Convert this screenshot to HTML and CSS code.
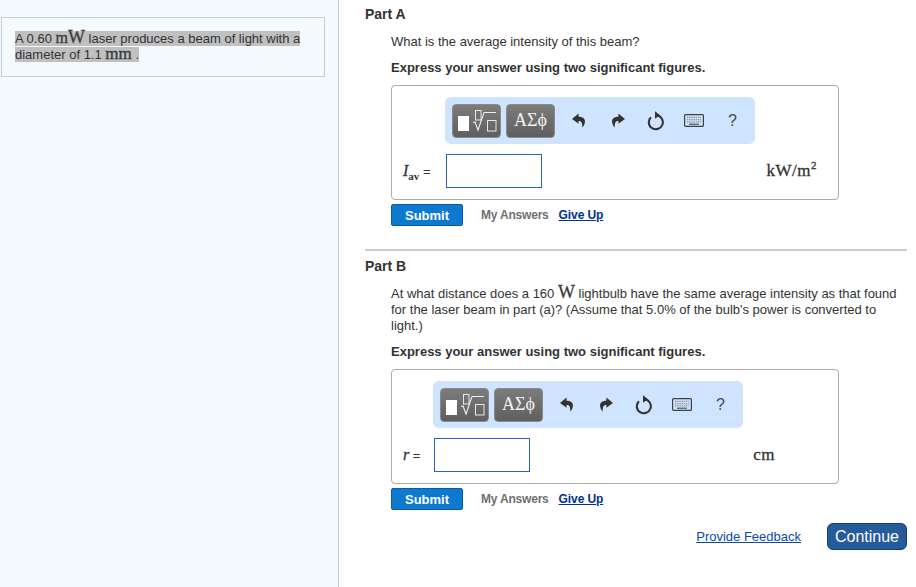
FILE: index.html
```html
<!DOCTYPE html>
<html lang="en">
<head>
<meta charset="utf-8">
<title>Part A and Part B</title>
<link rel="stylesheet" href="styles.css">
</head>
<body>
<svg class="defs" width="0" height="0" aria-hidden="true">
  <symbol id="i-undo" viewBox="0 0 14 15"><path d="M6.6 0.6 L0 6 L6.6 10.8 V8 C9.4 7.9 10.4 9.6 10.3 14.6 C14 10.8 14.8 3.7 6.6 3.8 Z" fill="#333"/></symbol>
  <symbol id="i-redo" viewBox="0 0 14 15"><path d="M7.4 0.6 L14 6 L7.4 10.8 V8 C4.6 7.9 3.6 9.6 3.7 14.6 C0 10.8 -0.8 3.7 7.4 3.8 Z" fill="#333"/></symbol>
  <symbol id="i-reset" viewBox="0 0 18 20"><path d="M9.5 4.3 A7 7 0 1 1 3.9 6.3" fill="none" stroke="#333" stroke-width="2.1"/><path d="M8 0.3 L13 4.2 L8 7.8 Z" fill="#333"/></symbol>
  <symbol id="i-keys" viewBox="0 0 20 13"><rect x="0.6" y="0.6" width="18.8" height="11.8" rx="1" fill="none" stroke="#3c4148" stroke-width="1.2"/><path d="M3 3.4h14M3 5.6h14M3 7.8h14" stroke="#8d9299" stroke-width="1.2" stroke-dasharray="1.4 .8" fill="none"/><path d="M5 10.2h10" stroke="#555" stroke-width="1.2"/></symbol>
  <symbol id="i-tpl" viewBox="0 0 46 28"><rect x="4" y="9" width="11" height="15" fill="#fff"/><rect x="21.5" y="3.5" width="5.5" height="9.5" fill="none" stroke="#e8e8e8"/><path d="M19 15.5 L21 15 L24 23 L30 5.5 H42" fill="none" stroke="#eee" stroke-width="1.1"/><rect x="33.5" y="13.5" width="8.5" height="10.5" fill="none" stroke="#e8e8e8"/></symbol>
</svg>
<div class="page">
  <aside class="side">
    <div class="intro"><p class="intro-text"><span class="mark">A 0.60 <span class="unit">m</span><span class="unit big">W</span> laser produces a beam of light with a diameter of 1.1 <span class="unit mm">mm</span> .</span></p></div>
  </aside>
  <main class="main">
    <section class="part part-a">
      <h2 class="part-title">Part A</h2>
      <div class="part-body">
        <p class="question">What is the average intensity of this beam?</p>
        <p class="instruction">Express your answer using two significant figures.</p>
        <div class="answer">
          <div class="toolbar toolbar-a">
            <button class="tool-btn" type="button" aria-label="Templates"><svg class="tpl" width="46" height="28"><use href="#i-tpl"/></svg></button>
            <button class="tool-btn sym" type="button">ΑΣϕ</button>
            <div class="tools">
              <svg class="ic" width="14" height="15"><use href="#i-undo"/></svg>
              <svg class="ic" width="14" height="15"><use href="#i-redo"/></svg>
              <svg class="ic" width="18" height="20"><use href="#i-reset"/></svg>
              <svg class="ic" width="20" height="13"><use href="#i-keys"/></svg>
              <span class="help">?</span>
            </div>
          </div>
          <div class="answer-row">
            <span class="label label-a"><i class="var">I</i><sub class="sub">av</sub> =</span>
            <span class="input"></span>
            <span class="units">kW/m<sup class="sup">2</sup></span>
          </div>
        </div>
        <div class="actions">
          <button class="submit" type="button">Submit</button>
          <span class="my">My Answers</span>
          <a class="give" href="#">Give Up</a>
        </div>
      </div>
    </section>
    <hr class="rule">
    <section class="part">
      <h2 class="part-title">Part B</h2>
      <div class="part-body">
        <p class="question">At what distance does a 160 <span class="unit big">W</span> lightbulb have the same average intensity as that found for the laser beam in part (a)? (Assume that 5.0% of the bulb's power is converted to light.)</p>
        <p class="instruction">Express your answer using two significant figures.</p>
        <div class="answer">
          <div class="toolbar toolbar-b">
            <button class="tool-btn" type="button" aria-label="Templates"><svg class="tpl" width="46" height="28"><use href="#i-tpl"/></svg></button>
            <button class="tool-btn sym" type="button">ΑΣϕ</button>
            <div class="tools">
              <svg class="ic" width="14" height="15"><use href="#i-undo"/></svg>
              <svg class="ic" width="14" height="15"><use href="#i-redo"/></svg>
              <svg class="ic" width="18" height="20"><use href="#i-reset"/></svg>
              <svg class="ic" width="20" height="13"><use href="#i-keys"/></svg>
              <span class="help">?</span>
            </div>
          </div>
          <div class="answer-row">
            <span class="label label-b"><i class="var">r</i> =</span>
            <span class="input"></span>
            <span class="units units-b">cm</span>
          </div>
        </div>
        <div class="actions">
          <button class="submit" type="button">Submit</button>
          <span class="my">My Answers</span>
          <a class="give" href="#">Give Up</a>
        </div>
      </div>
    </section>
    <div class="footer">
      <a class="feedback" href="#">Provide Feedback</a>
      <button class="continue" type="button">Continue</button>
    </div>
  </main>
</div>
</body>
</html>
```
FILE: styles.css
```css
* { box-sizing: border-box; }
html, body { margin: 0; height: 100%; }
body { background: #fff; color: #333; font-family: "Liberation Sans", Arial, sans-serif; font-size: 13px; overflow: hidden; }
.defs { display: block; height: 0; }
.page { display: flex; height: 587px; }

.side { width: 339px; flex: none; background: #f5faff; border-right: 1px solid #b9cfe3; padding: 17px 13px 0 1px; }
.intro { height: 60px; border: 1px solid #b9cfe3; padding: 13px 13px 0; }
.intro-text { margin: 0; font-size: 13px; line-height: 16px; color: #333; }
.mark { background: #c0c0c0; }
.unit { font-family: "Liberation Serif", "DejaVu Serif", serif; font-size: 16px; line-height: 0; color: #3a3a3a; -webkit-text-stroke: .3px #3a3a3a; }
.mm { font-size: 17px; }
.big { font-size: 18px; }

.main { flex: 1; min-width: 0; padding: 0 9px 0 26px; }
.part-a { padding-top: 6px; }
.part-title { margin: 0; font-size: 14px; line-height: 17px; font-weight: bold; color: #333; }
.part-body { padding-left: 26px; }
.question { margin: 11px 0 0; font-size: 13px; line-height: 16px; }
.instruction { margin: 10px 0 0; font-size: 13px; line-height: 16px; font-weight: bold; }

.answer { width: 448px; height: 115px; margin-top: 9px; border: 1px solid #aaa; border-radius: 4px; background: #fff; padding: 11px 0 0 11px; }
.toolbar { display: flex; align-items: center; width: 310px; height: 47px; background: #cfe5ff; border-radius: 6px; padding-left: 7px; }
.toolbar-a { margin-left: 42px; }
.toolbar-b { margin-left: 30px; }
.tool-btn { width: 49px; height: 34px; margin: 0 5px 0 0; padding: 0; border: 1px solid #8a8a8a; border-radius: 4px; background: linear-gradient(#7c7c7c, #5f5f5f); color: #f2f2f2; display: flex; align-items: center; justify-content: center; }
.sym { font-family: "Liberation Serif", serif; font-size: 18px; }
.tpl { display: block; }
.tools { display: flex; align-items: center; margin-left: 12px; }
.ic { display: block; flex: none; }
.ic:nth-child(1) { margin-right: 25px; }
.ic:nth-child(2) { margin-right: 22px; }
.ic:nth-child(3) { margin-right: 19px; }
.ic:nth-child(4) { margin-right: 24px; }
.help { font-size: 16px; line-height: 18px; color: #444; }

.answer-row { display: flex; align-items: center; height: 34px; margin-top: 10px; }
.label { font-size: 13px; color: #333; flex: none; }
.label-a { width: 43px; }
.label-b { width: 31px; }
.var { font-family: "Liberation Serif", serif; font-size: 16px; -webkit-text-stroke: .3px #333; }
.sub { font-family: "Liberation Serif", serif; font-size: 11px; font-weight: bold; line-height: 0; }
.input { width: 96px; height: 34px; border: 1px solid #2a62c4; background: #fff; flex: none; }
.units { margin-left: auto; margin-right: 21px; font-family: "Liberation Serif", serif; font-size: 17px; letter-spacing: .5px; color: #333; -webkit-text-stroke: .3px #333; }
.units-b { margin-right: 63px; }
.sup { font-size: 11px; line-height: 0; }

.actions { display: flex; align-items: center; margin-top: 4px; height: 22px; }
.submit { width: 72px; height: 22px; padding: 0; border: 1px solid #0d5c9e; border-radius: 2px; background: #0d79cf; color: #fff; font: bold 13px "Liberation Sans", Arial, sans-serif; }
.my { margin-left: 18px; font-size: 12px; font-weight: bold; letter-spacing: -.2px; color: #6f6f6f; }
.give { margin-left: 10px; font-size: 12px; font-weight: bold; letter-spacing: -.1px; color: #00318f; }

.rule { margin: 23px 0 0; height: 2px; border: 0; background: #ccc; }
.rule + .part { padding-top: 7px; }
.footer { display: flex; align-items: center; justify-content: flex-end; margin-top: 13px; }
.feedback { font-size: 13px; color: #0a4aa6; margin-right: 26px; }
.continue { width: 80px; height: 27px; padding: 0; border: 1px solid #123f75; border-radius: 6px; background: #255a9b; color: #fff; font: 16px "Liberation Sans", Arial, sans-serif; }
```
